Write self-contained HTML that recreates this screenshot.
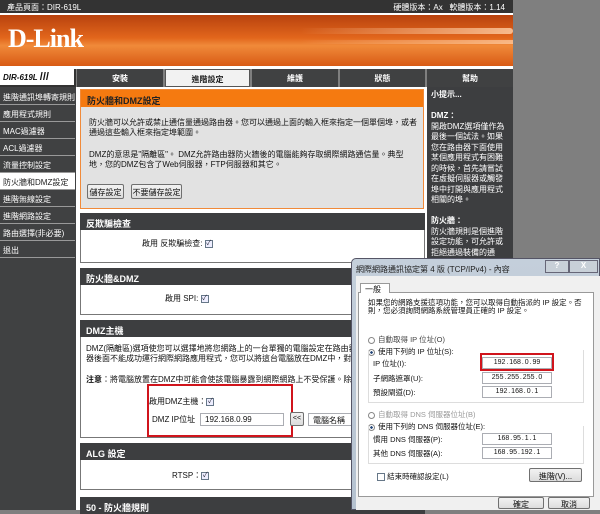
<!DOCTYPE html><html><head><meta charset="utf-8"><style>
*{margin:0;padding:0;box-sizing:border-box}
body{width:600px;height:510px;overflow:hidden;background:#7f7f7f;position:relative;font-family:"Liberation Sans","Noto Sans CJK TC",sans-serif;font-size:8px;color:#111}
.a{position:absolute}
.dk{background:#3d3e40;color:#fff}
.side div{height:17px;border-bottom:1px solid #999;color:#fff;padding:4px 0 0 3px;font-size:8px;background:#404142;white-space:nowrap;overflow:hidden}
.tab{top:69px;height:18px;background:#404142;color:#fff;text-align:center;font-weight:bold;padding-top:4px;font-size:8px}
.hd{background:#3d3e40;color:#fff;font-weight:bold;font-size:9px;padding:4px 0 0 6px;height:17px}
.box{border:1px solid #777;background:#fff}
.cb{display:inline-block;width:8px;height:8px;border:1px solid #678;background:#eef;vertical-align:middle;font-size:7px;line-height:6px;text-align:center;color:#223}
.in{position:absolute;background:#fff;border:1px solid #abadb3;font-size:8px;padding:1px 4px;white-space:nowrap;overflow:hidden}
.ip{text-align:center;font-size:7px;padding:1px 0;word-spacing:-1px}
.btn{position:absolute;border:1px solid #707070;border-radius:2px;background:linear-gradient(#f2f2f2,#dcdcdc);text-align:center;font-size:8px;padding-top:2px}
.rd{display:inline-block;width:7px;height:7px;border-radius:50%;border:1px solid #888;background:#fff;vertical-align:middle;margin-right:3px}
</style></head><body>
<div class="a dk" style="left:0;top:0;width:513px;height:13px;background:#333;font-size:8px;padding:2px 0 0 7px">產品頁面：DIR-619L<span style="position:absolute;right:8px">硬體版本：Ax &nbsp; 軟體版本：1.14</span></div>
<div class="a" style="left:0;top:13px;width:513px;height:2px;background:#fff"></div>
<div class="a" style="left:0;top:15px;width:513px;height:51px;background:linear-gradient(180deg,#b8420e 0%,#e2661c 45%,#f08a3a 60%,#d85a14 100%)"></div>
<div class="a" style="left:300px;top:28px;width:213px;height:6px;background:linear-gradient(90deg,rgba(255,220,180,0),rgba(255,210,170,.8));border-radius:3px"></div>
<div class="a" style="left:300px;top:40px;width:213px;height:4px;background:linear-gradient(90deg,rgba(255,220,180,0),rgba(255,210,170,.7))"></div>
<div class="a" style="left:8px;top:24px;color:#fff;font:bold 26px 'Liberation Serif',serif;letter-spacing:-1px">D-Link</div>
<div class="a" style="left:0;top:66px;width:513px;height:3px;background:#fff"></div>
<div class="a" style="left:0;top:69px;width:76px;height:18px;background:#fff;border-right:2px solid #333;font:italic bold 8px 'Liberation Sans';padding:2px 0 0 3px;border-bottom:2px solid #333;white-space:nowrap">DIR-619L <span style="font-size:11px;font-style:normal">///</span></div>
<div class="a tab" style="left:77px;width:86px">安裝</div>
<div class="a tab" style="left:165px;width:85px;background:#f2f2f2;color:#222;border:1px solid #555">進階設定</div>
<div class="a tab" style="left:252px;width:86px">維護</div>
<div class="a tab" style="left:340px;width:85px">狀態</div>
<div class="a tab" style="left:427px;width:86px">幫助</div>
<div class="a" style="left:0;top:87px;width:76px;height:423px;background:#404142"></div>
<div class="a side" style="left:0;top:88px;width:75px">
<div>進階通訊埠轉寄規則</div><div>應用程式規則</div><div>MAC過濾器</div><div>ACL過濾器</div><div>流量控制設定</div><div style="background:#fff;color:#222">防火牆和DMZ設定</div><div>進階無線設定</div><div>進階網路設定</div><div>路由選擇(非必要)</div><div>退出</div></div>
<div class="a" style="left:76px;top:87px;width:351px;height:423px;background:#fff"></div>
<div class="a dk" style="left:427px;top:87px;width:86px;height:423px;padding:3px 4px;font-size:8px;line-height:10.5px"><b>小提示...</b><br><br><b>DMZ：</b><br>開啟DMZ選項僅作為最後一個試法。如果您在路由器下面使用某個應用程式有困難的時候，首先請嘗試在虛擬伺服器或觸發埠中打開與應用程式相關的埠。<br><br><b>防火牆：</b><br>防火牆規則是個進階設定功能，可允許或拒絕通過裝備的通訊。您可以為裝備建立詳細的規則。請查閱手冊以獲取更詳細的內容和例子。</div>
<div class="a" style="left:80px;top:89px;width:344px;height:120px;border:1px solid #f08a3a;background:#e2e2e2"></div>
<div class="a" style="left:81px;top:90px;width:342px;height:17px;background:#f57a10;font-weight:bold;font-size:9px;padding:4px 6px;color:#222">防火牆和DMZ設定</div>
<div class="a" style="left:89px;top:118px;width:330px;line-height:10px">防火牆可以允許或禁止通信量通過路由器。您可以通過上面的輸入框來指定一個單個埠，或者通過這些輸入框來指定埠範圍。</div>
<div class="a" style="left:89px;top:150px;width:330px;line-height:10px">DMZ的意思是"隔離區"。 DMZ允許路由器防火牆後的電腦能夠存取網際網路通信量。典型地，您的DMZ包含了Web伺服器，FTP伺服器和其它。</div>
<div class="btn" style="left:87px;top:184px;width:37px;height:15px">儲存設定</div>
<div class="btn" style="left:131px;top:184px;width:51px;height:15px">不要儲存設定</div>
<div class="a box" style="left:80px;top:213px;width:345px;height:50px"></div>
<div class="a hd" style="left:80px;top:213px;width:345px">反欺騙檢查</div>
<div class="a" style="left:142px;top:238px">啟用 反欺騙檢查: <span class="cb">✓</span></div>
<div class="a box" style="left:80px;top:268px;width:345px;height:47px"></div>
<div class="a hd" style="left:80px;top:268px;width:345px">防火牆&amp;DMZ</div>
<div class="a" style="left:165px;top:293px">啟用 SPI: <span class="cb">✓</span></div>
<div class="a box" style="left:80px;top:320px;width:345px;height:118px"></div>
<div class="a hd" style="left:80px;top:320px;width:345px">DMZ主機</div>
<div class="a" style="left:86px;top:344px;width:340px;line-height:10px;white-space:nowrap;overflow:hidden">DMZ(隔離區)選項使您可以選擇地將您網路上的一台單獨的電腦設定在路由器之外。<br>器後面不能成功運行網際網路應用程式，您可以將這台電腦放在DMZ中，對網際網路</div>
<div class="a" style="left:86px;top:374px;width:340px;white-space:nowrap;overflow:hidden"><b>注意</b>：將電腦放置在DMZ中可能會使該電腦暴露到網際網路上不受保護。除非必要</div>
<div class="a" style="left:147px;top:384px;width:146px;height:53px;border:2px solid #d0141c"></div>
<div class="a" style="left:149px;top:396px">啟用DMZ主機：<span class="cb">✓</span></div>
<div class="a" style="left:152px;top:414px">DMZ IP位址 &nbsp;：</div>
<div class="in" style="left:200px;top:413px;width:84px;height:13px">192.168.0.99</div>
<div class="btn" style="left:290px;top:412px;width:14px;height:14px;font-size:7px">&lt;&lt;</div>
<div class="in" style="left:308px;top:413px;width:50px;height:13px">電腦名稱</div>
<div class="a box" style="left:80px;top:443px;width:345px;height:47px"></div>
<div class="a hd" style="left:80px;top:443px;width:345px">ALG 設定</div>
<div class="a" style="left:172px;top:470px">RTSP：<span class="cb">✓</span></div>
<div class="a hd" style="left:80px;top:497px;width:345px">50 - 防火牆規則</div>
<!-- dialog -->
<div class="a" style="left:351px;top:258px;width:249px;height:252px;background:linear-gradient(#c4cfdb,#b5c2d0);border:1px solid #556;border-radius:5px 0 0 0"></div>
<div class="a" style="left:356px;top:264px;font-size:8px;color:#222">網際網路通訊協定第 4 版 (TCP/IPv4) - 內容</div>
<div class="a" style="left:545px;top:260px;width:24px;height:13px;background:#c8d0d8;border:1px solid #667;color:#fff;text-align:center;font-weight:bold">?</div>
<div class="a" style="left:569px;top:260px;width:29px;height:13px;background:#c8d0d8;border:1px solid #667;color:#fff;text-align:center;font-weight:bold">X</div>
<div class="a" style="left:356px;top:276px;width:244px;height:234px;background:#f0f0f0"></div>
<div class="a" style="left:358px;top:292px;width:236px;height:205px;background:#fff;border:1px solid #999"></div>
<div class="a" style="left:360px;top:283px;width:30px;height:10px;background:#fff;border:1px solid #999;border-bottom:none;padding-left:4px">一般</div>
<div class="a" style="left:368px;top:299px;width:224px;line-height:8px;font-size:7.5px">如果您的網路支援這項功能，您可以取得自動指派的 IP 設定。否則，您必須詢問網路系統管理員正確的 IP 設定。</div>
<div class="a" style="left:368px;top:334px;font-size:7.5px;color:#444"><span class="rd"></span>自動取得 IP 位址(O)</div>
<div class="a" style="left:368px;top:346px;font-size:7.5px"><span class="rd" style="background:radial-gradient(#247 35%,#fff 40%)"></span>使用下列的 IP 位址(S):</div>
<div class="a" style="left:368px;top:350px;width:216px;height:53px;border:1px solid #ddd;border-top:none"></div>
<div class="a" style="left:373px;top:358px;font-size:7.5px">IP 位址(I):</div>
<div class="a" style="left:373px;top:373px;font-size:7.5px">子網路遮罩(U):</div>
<div class="a" style="left:373px;top:387px;font-size:7.5px">預設閘道(D):</div>
<div class="in ip" style="left:482px;top:357px;width:70px;height:12px">192 . 168 . 0 . 99</div>
<div class="a" style="left:480px;top:353px;width:74px;height:18px;border:2px solid #d0141c"></div>
<div class="in ip" style="left:482px;top:372px;width:70px;height:12px">255 . 255 . 255 . 0</div>
<div class="in ip" style="left:482px;top:386px;width:70px;height:12px">192 . 168 . 0 . 1</div>
<div class="a" style="left:368px;top:409px;font-size:7.5px;color:#999"><span class="rd"></span>自動取得 DNS 伺服器位址(B)</div>
<div class="a" style="left:368px;top:421px;font-size:7.5px"><span class="rd" style="background:radial-gradient(#247 35%,#fff 40%)"></span>使用下列的 DNS 伺服器位址(E):</div>
<div class="a" style="left:368px;top:426px;width:216px;height:38px;border:1px solid #ddd;border-top:none"></div>
<div class="a" style="left:373px;top:434px;font-size:7.5px">慣用 DNS 伺服器(P):</div>
<div class="a" style="left:373px;top:448px;font-size:7.5px">其他 DNS 伺服器(A):</div>
<div class="in ip" style="left:482px;top:433px;width:70px;height:12px">168 . 95 . 1 . 1</div>
<div class="in ip" style="left:482px;top:447px;width:70px;height:12px">168 . 95 . 192 . 1</div>
<div class="a" style="left:377px;top:471px;font-size:7.5px"><span class="cb" style="background:#fff"></span> 結束時確認設定(L)</div>
<div class="btn" style="left:529px;top:468px;width:53px;height:14px">進階(V)...</div>
<div class="btn" style="left:498px;top:497px;width:46px;height:12px;padding-top:1px">確定</div>
<div class="btn" style="left:548px;top:497px;width:42px;height:12px;padding-top:1px">取消</div>
</body></html>
